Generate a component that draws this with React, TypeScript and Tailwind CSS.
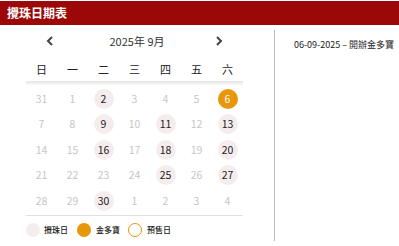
import React from "react";

const font = { fontFamily: '"Noto Sans CJK TC", "Liberation Sans", sans-serif' };

type Cell = { d: number; dim?: boolean; draw?: boolean; snow?: boolean };

const rows: Cell[][] = [
  [{ d: 31, dim: true }, { d: 1, dim: true }, { d: 2, draw: true }, { d: 3, dim: true }, { d: 4, dim: true }, { d: 5, dim: true }, { d: 6, snow: true }],
  [{ d: 7, dim: true }, { d: 8, dim: true }, { d: 9, draw: true }, { d: 10, dim: true }, { d: 11, draw: true }, { d: 12, dim: true }, { d: 13, draw: true }],
  [{ d: 14, dim: true }, { d: 15, dim: true }, { d: 16, draw: true }, { d: 17, dim: true }, { d: 18, draw: true }, { d: 19, dim: true }, { d: 20, draw: true }],
  [{ d: 21, dim: true }, { d: 22, dim: true }, { d: 23, dim: true }, { d: 24, dim: true }, { d: 25, draw: true }, { d: 26, dim: true }, { d: 27, draw: true }],
  [{ d: 28, dim: true }, { d: 29, dim: true }, { d: 30, draw: true }, { d: 1, dim: true }, { d: 2, dim: true }, { d: 3, dim: true }, { d: 4, dim: true }],
];

const weekdays = ["日", "一", "二", "三", "四", "五", "六"];

function DayCell({ c }: { c: Cell }) {
  let cls = "text-[#c6c6c6]";
  if (c.draw) cls = "bg-[#f5eded] text-[#222222]";
  if (c.snow) cls = "bg-[#e8960a] text-white";
  return (
    <div className="flex h-[25.5px] items-center justify-center">
      <div className={`flex h-[20px] w-[20px] items-center justify-center rounded-full text-[10.5px] leading-none ${cls}`}>
        {c.d}
      </div>
    </div>
  );
}

export default function App() {
  return (
    <div className="h-[246px] w-[399px] overflow-hidden bg-white" style={font}>
      <div className="mt-px flex h-[24px] items-center bg-[#9c0808] pl-[7px] text-[12px] font-bold text-white">
        攪珠日期表
      </div>
      <div className="mt-[5px] flex h-[211px]">
        <div className="w-[274px] pl-[26px]">
          <div className="flex h-[22px] w-[217px] items-center justify-between px-[20px]">
            <svg width="8" height="10" viewBox="0 0 8 10">
              <path d="M6 1 L2 5 L6 9" fill="none" stroke="#444" strokeWidth="2" />
            </svg>
            <span className="pl-[5px] text-[11px] text-[#333]">2025年 9月</span>
            <svg width="8" height="10" viewBox="0 0 8 10">
              <path d="M2 1 L6 5 L2 9" fill="none" stroke="#444" strokeWidth="2" />
            </svg>
          </div>
          <div className="mt-[5px] grid h-[24px] w-[217px] grid-cols-7 items-center text-center text-[11px] text-[#222]">
            {weekdays.map((w) => (
              <span key={w}>{w}</span>
            ))}
          </div>
          <div className="h-[5px] w-[217px] bg-gradient-to-b from-[#e4e4e4] to-white" />
          <div className="w-[217px] border-b border-[#e0e0e0] pb-px">
            {rows.map((r, i) => (
              <div key={i} className="grid grid-cols-7">
                {r.map((c, j) => (
                  <DayCell key={j} c={c} />
                ))}
              </div>
            ))}
          </div>
          <div className="mt-[7px] flex items-center text-[8px] font-medium text-[#222]">
            <span className="h-[14px] w-[14px] rounded-full bg-[#f5eded]" />
            <span className="ml-[4px]">攪珠日</span>
            <span className="ml-[9px] h-[14px] w-[14px] rounded-full bg-[#e8960a]" />
            <span className="ml-[5px]">金多寶</span>
            <span className="ml-[8px] h-[14px] w-[14px] rounded-full border border-[#e8960a]" />
            <span className="ml-[5px]">預售日</span>
          </div>
        </div>
        <div className="flex-1 border-l border-[#bbbbbb] pl-[19px] pt-[9px]">
          <div className="text-[9px] leading-[12px] text-[#222]">06-09-2025 – 開辦金多寶</div>
        </div>
      </div>
    </div>
  );
}
